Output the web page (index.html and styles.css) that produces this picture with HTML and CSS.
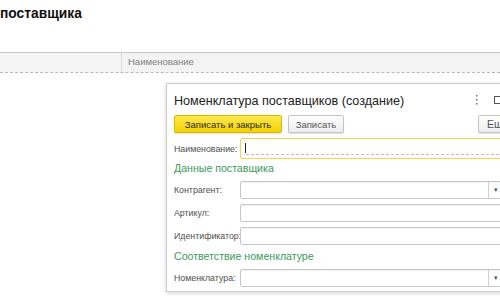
FILE: index.html
```html
<!DOCTYPE html>
<html lang="ru">
<head>
<meta charset="utf-8">
<link rel="stylesheet" href="styles.css">
</head>
<body>
<div class="page">
  <h1 class="page-title">поставщика</h1>
  <div class="table">
    <div class="thead">
      <div class="th th-first"></div>
      <div class="th">Наименование</div>
    </div>
  </div>
</div>

<div class="dialog">
  <div class="dlg-head">
    <div class="dlg-title">Номенклатура поставщиков (создание)</div>
    <div class="dlg-icons">
      <svg class="kebab" width="3" height="10" viewBox="0 0 3 10"><rect x="1" y="0" width="1.5" height="1.5" fill="#777"/><rect x="1" y="4" width="1.5" height="1.5" fill="#777"/><rect x="1" y="8" width="1.5" height="1.5" fill="#777"/></svg>
      <svg class="sq" width="9" height="8" viewBox="0 0 9 8"><rect x="0.5" y="0.5" width="8" height="7" fill="none" stroke="#555"/></svg>
    </div>
  </div>
  <div class="toolbar">
    <button class="btn btn-primary">Записать и закрыть</button>
    <button class="btn btn-save">Записать</button>
    <span class="spacer"></span>
    <button class="btn btn-more">Еще</button>
  </div>
  <div class="row row-name">
    <label class="lbl">Наименование:</label>
    <div class="input input-focus"><span class="caret"></span></div>
  </div>
  <div class="group">Данные поставщика</div>
  <div class="row">
    <label class="lbl">Контрагент:</label>
    <div class="input input-select"><span class="drop">▾</span></div>
  </div>
  <div class="row">
    <label class="lbl">Артикул:</label>
    <div class="input"></div>
  </div>
  <div class="row">
    <label class="lbl">Идентификатор:</label>
    <div class="input"></div>
  </div>
  <div class="group">Соответствие номенклатуре</div>
  <div class="row">
    <label class="lbl">Номенклатура:</label>
    <div class="input input-select"><span class="drop">▾</span></div>
  </div>
</div>
</body>
</html>
```
FILE: styles.css
```css
html, body {
  margin: 0;
  padding: 0;
  background: #fff;
  font-family: "Liberation Sans", Arial, sans-serif;
  overflow: hidden;
  width: 500px;
  height: 300px;
}
.page {
  padding-top: 6px;
}
.page-title {
  margin: 0;
  font-size: 13.8px;
  font-weight: bold;
  color: #111;
  line-height: 16px;
  height: 16px;
}
.table {
  margin-top: 30px;
}
.thead {
  display: flex;
  height: 19px;
  border-top: 1px solid #c8c8c8;
  border-bottom: 1px dashed #b8b8b8;
}
.th {
  flex: 1;
  background: #f3f3f3;
  font-size: 9.5px;
  color: #808080;
  line-height: 18px;
  padding-left: 6px;
}
.th-first {
  flex: none;
  width: 115px;
  border-right: 1px solid #dadada;
  background: #f5f5f5;
}

.dialog {
  position: absolute;
  left: 166px;
  top: 83px;
  width: 360px;
  height: 209px;
  background: #fff;
  border: 1px solid #cfcfcf;
  box-shadow: 0 1px 4px rgba(0,0,0,0.18);
  padding: 0 0 0 7px;
  box-sizing: border-box;
}
.dlg-head {
  display: flex;
  align-items: center;
  height: 31px;
}
.dlg-title {
  font-size: 12.6px;
  color: #222;
  flex: 1;
  padding-top: 2px;
}
.dlg-icons {
  display: flex;
  align-items: center;
  gap: 16px;
  width: 50px;
  padding-top: 1px;
}
.toolbar {
  display: flex;
  align-items: center;
  height: 18px;
  gap: 6px;
}
.spacer { flex: 1; }
.btn {
  font-family: "Liberation Sans", Arial, sans-serif;
  font-size: 9.5px;
  height: 18px;
  padding: 0;
  border: 1px solid #c4c4c4;
  border-radius: 2px;
  background: linear-gradient(#ffffff, #ededed);
  color: #555;
  box-shadow: 0 1px 1px rgba(0,0,0,0.12);
}
.btn-primary {
  width: 108px;
  background: linear-gradient(#fde94c, #f3d200);
  border-color: #d9ba00;
  color: #2a2a2a;
}
.btn-save {
  width: 56px;
}
.btn-more {
  width: 40px;
  padding: 0 0 0 8px;
  text-align: left;
  margin-right: 7px;
  font-size: 10.5px;
}
.row {
  display: flex;
  align-items: center;
  height: 23px;
  padding-right: 22px;
}
.row-name {
  margin-top: 5px;
  height: 21px;
  padding-right: 0;
}
.lbl {
  width: 66px;
  flex: none;
  font-size: 8.8px;
  color: #505050;
  white-space: nowrap;
}
.input {
  flex: 1;
  height: 18px;
  border: 1px solid #c6c6c6;
  border-radius: 2px;
  box-sizing: border-box;
  position: relative;
  box-shadow: inset 0 1px 1px rgba(0,0,0,0.05);
}
.input-focus {
  height: 21px;
  border: 1px solid #f1d64a;
  box-shadow: none;
  background: #fff;
}
.input-focus::after {
  content: "";
  position: absolute;
  left: 5px;
  right: 0;
  bottom: 3px;
  border-bottom: 1px dashed #f1a9b4;
}
.caret {
  position: absolute;
  left: 4px;
  top: 4px;
  width: 1px;
  height: 10px;
  background: #222;
}
.input-select .drop {
  position: absolute;
  right: 0;
  top: 0;
  bottom: 0;
  width: 14px;
  border-left: 1px solid #d0d0d0;
  font-size: 7px;
  color: #555;
  line-height: 16px;
  text-align: left;
  padding-left: 5px;
  box-sizing: border-box;
}
.group {
  font-size: 10.6px;
  color: #3c9a5c;
  height: 19px;
  line-height: 19px;
}
```
